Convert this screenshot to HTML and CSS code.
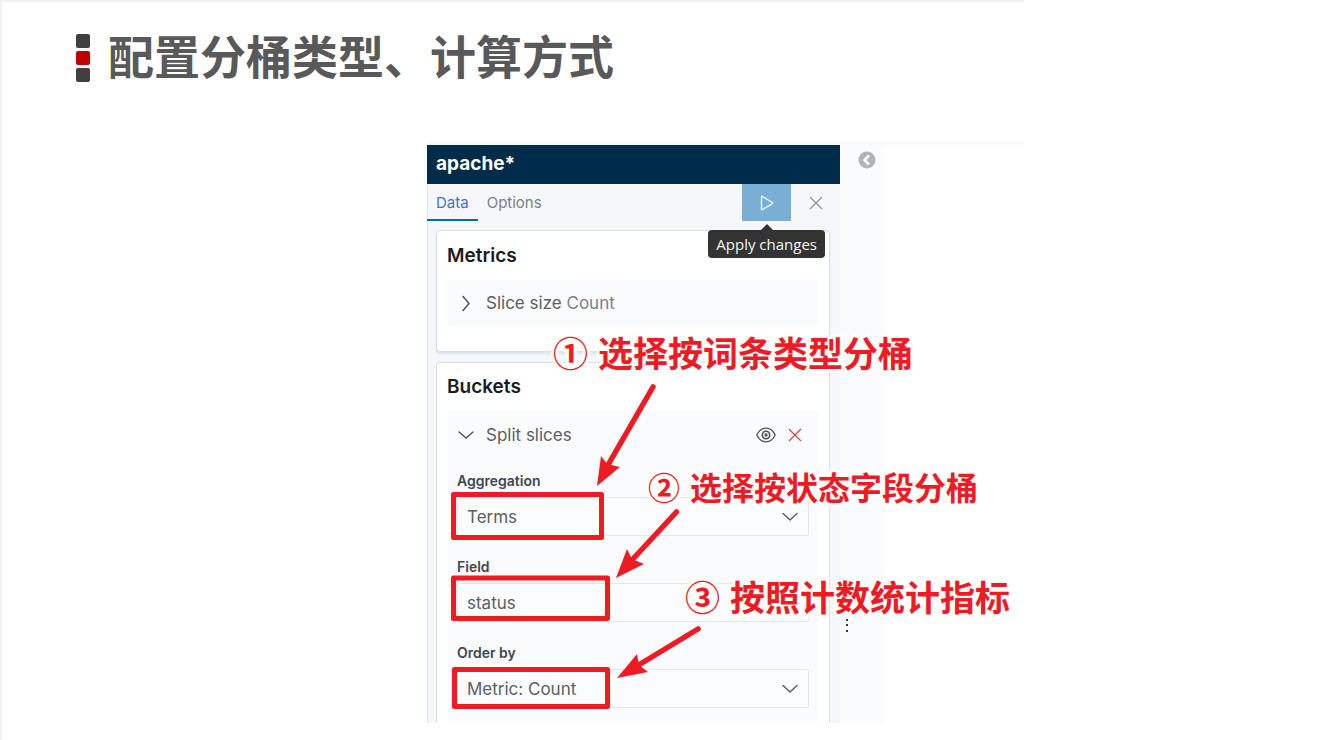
FILE: index.html
```html
<!DOCTYPE html>
<html lang="zh-CN">
<head>
<meta charset="utf-8">
<meta name="viewport" content="width=device-width, initial-scale=1">
<title>配置分桶类型、计算方式</title>
<link rel="stylesheet" href="styles.css">
</head>
<body>
<main class="slide">
  <header class="slide-header">
    <div class="marker"><i></i><i class="accent"></i><i></i></div>
    <h1>配置分桶类型、计算方式</h1>
  </header>

  <section class="figure">
    <div class="editor">
      <h2 class="index-name">apache*</h2>
      <div class="toolbar">
        <nav class="tabs">
          <button class="tab active" type="button">Data</button>
          <button class="tab" type="button">Options</button>
        </nav>
        <div class="actions">
          <button class="apply" type="button" aria-label="Apply">
            <svg width="16" height="18" viewBox="0 0 16 18" fill="none" stroke="#e8f3fa" stroke-width="1.4" stroke-linejoin="round"><path d="M2.500 3v12.200q0 .8 .8 .4L13.500 9.600q.6-.5 0-1L3.300 2.300q-.8-.3-.8.7z"/></svg>
          </button>
          <button class="discard" type="button" aria-label="Discard">
            <svg width="14" height="14" viewBox="0 0 14 14" fill="none" stroke="#8f9299" stroke-width="1.2"><path d="M1 1l12 12M13 1L1 13"/></svg>
          </button>
          <span class="tooltip" role="tooltip">Apply changes</span>
        </div>
      </div>
      <div class="cards">
        <section class="card">
          <h3>Metrics</h3>
          <div class="group">
            <button class="row" type="button">
              <svg width="18" height="18" viewBox="0 0 18 18" fill="none" stroke="#4f545c" stroke-width="1.5" stroke-linecap="round" stroke-linejoin="round"><path d="M6 2.500l6 7-6 7"/></svg>
              <span>Slice size <span class="soft">Count</span></span>
            </button>
          </div>
        </section>
        <section class="card card-open">
          <h3>Buckets</h3>
          <div class="group group-open">
            <div class="row-line">
              <button class="row" type="button">
                <svg width="18" height="18" viewBox="0 0 18 18" fill="none" stroke="#4f545c" stroke-width="1.500" stroke-linecap="round" stroke-linejoin="round"><path d="M2 6l7 6 7-6"/></svg>
                <span>Split slices</span>
              </button>
              <button class="icon" type="button" aria-label="Toggle">
                <svg width="20" height="16" viewBox="0 0 20 16" fill="none" stroke="#4d525b" stroke-width="1.300"><path d="M.8 8Q4.200 1.200 10 1.200T19.200 8Q15.800 14.800 10 14.800T.8 8z"/><circle cx="10" cy="8" r="3.700" stroke-width="1.600"/><circle cx="10" cy="8" r="1"/></svg>
              </button>
              <button class="icon" type="button" aria-label="Remove">
                <svg width="14" height="14" viewBox="0 0 14 14" fill="none" stroke="#cf4a42" stroke-width="1.300"><path d="M1 1l12 12M13 1L1 13"/></svg>
              </button>
            </div>
            <div class="field">
              <label for="aggregation">Aggregation</label>
              <div class="control">
                <select id="aggregation"><option>Terms</option></select>
                <svg class="chevron" width="16" height="10" viewBox="0 0 16 10" fill="none" stroke="#5b6068" stroke-width="1.500" stroke-linecap="round" stroke-linejoin="round"><path d="M1 1.500l7 6.500 7-6.500"/></svg>
              </div>
            </div>
            <div class="field">
              <label for="field">Field</label>
              <div class="control">
                <select id="field"><option>status</option></select>
              </div>
            </div>
            <div class="field">
              <label for="order">Order by</label>
              <div class="control">
                <select id="order"><option>Metric: Count</option></select>
                <svg class="chevron" width="16" height="10" viewBox="0 0 16 10" fill="none" stroke="#5b6068" stroke-width="1.500" stroke-linecap="round" stroke-linejoin="round"><path d="M1 1.500l7 6.500 7-6.500"/></svg>
              </div>
            </div>
          </div>
        </section>
      </div>
    </div>
    <aside class="gutter">
      <button class="collapse" type="button" aria-label="Collapse">
        <svg width="18" height="18" viewBox="0 0 18 18" fill="none"><circle cx="9" cy="9" r="8.500" fill="#b1b3b6"/><path d="M11 4.500L6.500 9l4.500 4.500" stroke="#fff" stroke-width="2.600"/></svg>
      </button>
      <svg class="grip" width="4" height="16" viewBox="0 0 4 16" fill="#343741"><path d="M1 1h2v2H1zM1 6h2v2H1zM1 12h2v2H1z"/></svg>
    </aside>

    <svg class="marks" viewBox="427 141 597 582" width="597" height="582" fill="none" stroke="#ed1c24">
      <g stroke-width="5" stroke-linejoin="round">
        <rect x="453.500" y="494.500" width="148" height="43"/>
        <rect x="453.500" y="578" width="154" height="40.500"/>
        <rect x="454.500" y="669.500" width="153" height="37"/>
      </g>
      <g stroke-width="5.500" stroke-linecap="round">
        <path d="M653 387L608 465M676.500 512L632 560M698 629L637 666"/>
      </g>
      <g fill="#ed1c24" stroke="none">
        <path d="M597 486l4-30 6 8 13 3z"/>
        <path d="M616 578l11-29 5 10 12 5z"/>
        <path d="M617 678l20-24 2 11 9 7z"/>
      </g>
    </svg>
    <p class="note note-1"><span>①</span>选择按词条类型分桶</p>
    <p class="note note-2"><span>②</span>选择按状态字段分桶</p>
    <p class="note note-3"><span>③</span>按照计数统计指标</p>
  </section>
</main>
</body>
</html>
```
FILE: styles.css
```css
* { box-sizing: border-box; }
body {
  margin: 0;
  background: #fff;
  color: #343741;
  font-family: Inter, "Noto Sans CJK SC", sans-serif;
}
h1, h2, h3, p { margin: 0; }
svg { display: block; }
button {
  margin: 0;
  padding: 0;
  border: 0;
  background: none;
  color: inherit;
  font: inherit;
  display: flex;
  align-items: center;
}
.slide {
  max-width: 1024px;
  min-height: 100vh;
  border-top: 2px solid #f2f2f2;
  border-left: 2px solid #f2f2f2;
  padding-top: 24px;
}
.slide-header {
  display: flex;
  align-items: center;
  gap: 18px;
  height: 64px;
  padding-left: 74px;
}
.marker { display: grid; gap: 3px; }
.marker i {
  width: 14px;
  height: 14px;
  border-radius: 2px;
  background: #404040;
}
.marker .accent { background: #c00000; }
h1 {
  padding-bottom: 8px;
  color: #595959;
  font: 700 46px/56px "Noto Sans CJK SC", sans-serif;
}
.figure {
  position: relative;
  display: flex;
  margin: 51px 0 0 425px;
  border-top: 4px solid #f9fafc;
}
.editor {
  flex: 0 1 413px;
  background: #f5f7fa;
  border-left: 1px solid #dfe4ed;
}
.index-name {
  margin-left: -1px;
  padding-left: 9px;
  background: #002b49;
  color: #fff;
  font: 700 19px/38px Inter, sans-serif;
  padding-bottom: 1px;
}
.toolbar, .tabs, .actions { display: flex; height: 37px; }
.toolbar { justify-content: space-between; margin-left: -1px; }
.tab {
  padding: 2px 9px 0;
  border-bottom: 2px solid transparent;
  color: #7b8088;
  font-size: 15px;
}
.tab.active {
  border-bottom-color: #006bb4;
  color: #3a78bd;
}
.actions { position: relative; }
.apply, .discard { width: 49px; justify-content: center; }
.apply { background: #79aed5; }
.tooltip {
  position: absolute;
  top: 46px;
  right: 15px;
  padding: 0 8px;
  border-radius: 4px;
  background: #333;
  color: #f5f5f5;
  font: 500 15px/28px "Open Sans", sans-serif;
  white-space: nowrap;
  z-index: 1;
}
.tooltip::before {
  content: "";
  position: absolute;
  left: 50%;
  bottom: 100%;
  margin-left: -6px;
  border: 6px solid transparent;
  border-top-width: 0;
  border-bottom-color: #333;
}
.cards { display: grid; gap: 10px; padding: 9px 10px 0 8px; }
.card {
  padding: 11px 10px 25px;
  border: 1px solid #d9dfea;
  border-radius: 4px;
  background: #fff;
  box-shadow: 0 2px 2px #dfe4ee;
}
.card-open {
  padding-top: 10px;
  padding-bottom: 0;
  border-bottom: 0;
  border-radius: 4px 4px 0 0;
  box-shadow: none;
}
h3 { color: #1a1c21; font: 600 19px/28px Inter, sans-serif; }
.group {
  margin-top: 10px;
  padding: 0 10px;
  border-radius: 4px;
  background: #fafbfd;
  color: #5a5e66;
  font-size: 17px;
}
.group-open { padding-bottom: 15px; }
.row { flex: 1; height: 46px; gap: 11px; text-align: left; }
.soft { color: #7b8089; }
.row-line {
  display: flex;
  gap: 12px;
  height: 48px;
  align-items: center;
  margin-bottom: 6px;
  padding-right: 7px;
}
.field { margin-bottom: 15px; }
.field:last-child { margin-bottom: 0; }
label {
  display: block;
  color: #404650;
  font-size: 14px;
  font-weight: 600;
  line-height: 32px;
}
.control { position: relative; }
select {
  appearance: none;
  display: block;
  width: 100%;
  height: 39px;
  padding: 0 9px;
  border: 1px solid #e3e6ef;
  border-radius: 2px;
  background: #fbfcfd;
  color: #5a5f68;
  font: 400 17px Inter, sans-serif;
}
.chevron { position: absolute; right: 11px; top: 15px; }
.gutter {
  flex: 0 0 44px;
  background: #fafbfd;
}
.collapse { margin: 6px 0 0 18px; }
.grip { margin: 449px 0 0 5px; }
.marks { position: absolute; top: -4px; left: 0; z-index: 2; }
.note {
  position: absolute;
  z-index: 3;
  display: flex;
  gap: 10px;
  color: #ed1c24;
  font: 700 35px/48px "Noto Sans CJK SC", sans-serif;
  white-space: nowrap;
  -webkit-text-stroke: 6px #fff;
  paint-order: stroke fill;
}
.note-1 { left: 126px; top: 183px; }
.note-2 { left: 221px; top: 317px; font-size: 32px; }
.note-3 { left: 258px; top: 427px; }
```
